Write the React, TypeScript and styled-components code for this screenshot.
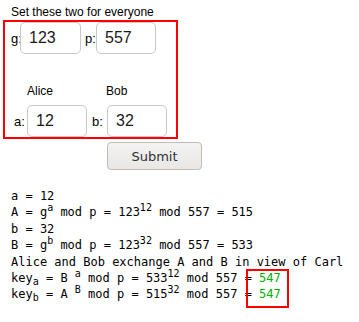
import React from "react";
import styled, { createGlobalStyle } from "styled-components";

const Global = createGlobalStyle`
  html, body { margin: 0; padding: 0; background: #fff; }
  body { font-family: "Liberation Sans", Arial, sans-serif; color: #000; }
`;

const Page = styled.div`
  display: flex;
  flex-direction: column;
  align-items: flex-start;
  padding-top: 5px;
  padding-bottom: 16px;
`;

const Title = styled.div`
  margin-left: 11px;
  font-size: 12px;
  line-height: 14px;
  height: 15px;
`;

const Box = styled.div`
  box-sizing: border-box;
  margin-left: 3px;
  width: 175px;
  height: 119px;
  border: 2px solid #ff0000;
  display: flex;
  flex-direction: column;
`;

const Row = styled.div<{ $pad: number }>`
  display: flex;
  align-items: baseline;
  padding-left: ${(p) => p.$pad}px;
`;

const Label = styled.span<{ $w: number; $gap?: number }>`
  width: ${(p) => p.$w}px;
  margin-left: ${(p) => p.$gap ?? 0}px;
  font-size: 13px;
  flex: none;
`;

const Field = styled.input<{ $w: number }>`
  box-sizing: border-box;
  width: ${(p) => p.$w}px;
  height: 32px;
  margin: 0;
  padding: 0 0 0 8px;
  border: 1px solid #cdc7c2;
  border-radius: 5px;
  background: #fff;
  font-family: "Liberation Sans", Arial, sans-serif;
  font-size: 16px;
  color: #1a1a1a;
  outline: none;
  flex: none;
`;

const Names = styled.div`
  display: flex;
  margin-top: 30px;
  padding-left: 22px;
  font-size: 12px;
  line-height: 14px;
  height: 14px;
`;

const Name = styled.span<{ $w: number }>`
  width: ${(p) => p.$w}px;
  flex: none;
`;

const Lower = styled(Row)`
  margin-top: 7px;
`;

const Button = styled.button`
  box-sizing: border-box;
  margin: 3px 0 0 107px;
  width: 95px;
  height: 28px;
  padding: 0;
  border: 1px solid #c0bbb5;
  border-radius: 4px;
  background: linear-gradient(#f4f3f2, #e9e7e5);
  font-family: "DejaVu Sans", sans-serif;
  font-size: 13px;
  color: #2e3436;
`;

const Output = styled.div`
  position: relative;
  margin: 18px 0 0 11px;
  font-family: "DejaVu Sans Mono", monospace;
  font-size: 12px;
  line-height: 16.4px;
  color: #000;
  white-space: pre;
  sup, sub { font-size: 10px; line-height: 0; }
`;

const Line = styled.div``;

const Good = styled.span`
  color: #00b000;
`;

const Highlight = styled.div`
  position: absolute;
  left: 235px;
  top: 81px;
  width: 43px;
  height: 39px;
  box-sizing: border-box;
  border: 2px solid #ff0000;
`;

export default function App() {
  return (
    <>
      <Global />
      <Page>
        <Title>Set these two for everyone</Title>
        <Box>
          <Row $pad={6}>
            <Label $w={9}>g:</Label>
            <Field $w={61} defaultValue="123" />
            <Label $w={11} $gap={4}>p:</Label>
            <Field $w={60} defaultValue="557" />
          </Row>
          <Names>
            <Name $w={79}>Alice</Name>
            <Name $w={60}>Bob</Name>
          </Names>
          <Lower $pad={9}>
            <Label $w={13}>a:</Label>
            <Field $w={60} defaultValue="12" />
            <Label $w={15} $gap={5}>b:</Label>
            <Field $w={60} defaultValue="32" />
          </Lower>
        </Box>
        <Button>Submit</Button>
        <Output>
          <Line>a = 12</Line>
          <Line>A = g<sup>a</sup> mod p = 123<sup>12</sup> mod 557 = 515</Line>
          <Line>b = 32</Line>
          <Line>B = g<sup>b</sup> mod p = 123<sup>32</sup> mod 557 = 533</Line>
          <Line>Alice and Bob exchange A and B in view of Carl</Line>
          <Line>key<sub>a</sub> = B <sup>a</sup> mod p = 533<sup>12</sup> mod 557 = <Good>547</Good></Line>
          <Line>key<sub>b</sub> = A <sup>B</sup> mod p = 515<sup>32</sup> mod 557 = <Good>547</Good></Line>
          <Highlight />
        </Output>
      </Page>
    </>
  );
}
